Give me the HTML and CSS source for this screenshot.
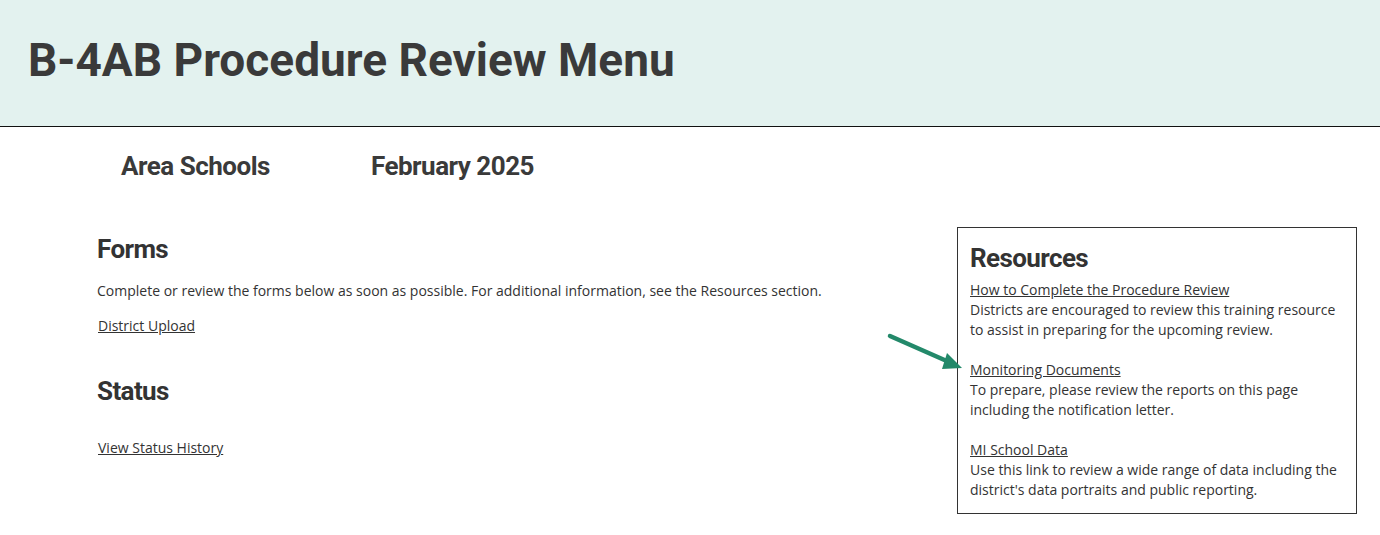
FILE: index.html
```html
<!DOCTYPE html>
<html lang="en">
<head>
<meta charset="utf-8">
<title>B-4AB Procedure Review Menu</title>
<link rel="stylesheet" href="styles.css">
</head>
<body>
<header class="page-header">
  <h1 class="page-title">B-4AB Procedure Review Menu</h1>
</header>
<main class="page-main">
  <div class="meta-row">
    <h2 class="meta-item">Area Schools</h2>
    <h2 class="meta-item">February 2025</h2>
  </div>
  <div class="content">
    <div class="left-col">
      <section class="section forms">
        <h2 class="section-title">Forms</h2>
        <p class="section-text">Complete or review the forms below as soon as possible. For additional information, see the Resources section.</p>
        <a class="link" href="#">District Upload</a>
      </section>
      <section class="section status">
        <h2 class="section-title">Status</h2>
        <a class="link" href="#">View Status History</a>
      </section>
    </div>
    <aside class="resources">
      <svg class="arrow" width="80" height="40" viewBox="0 0 80 40" aria-hidden="true">
        <line x1="3" y1="4" x2="62" y2="30" stroke="#23896a" stroke-width="4.5" stroke-linecap="round"/>
        <polygon points="60,21 75,36 55,37" fill="#23896a"/>
      </svg>
      <h2 class="res-title">Resources</h2>
      <div class="res-item">
        <a class="link" href="#">How to Complete the Procedure Review</a>
        <p class="res-text">Districts are encouraged to review this training resource to assist in preparing for the upcoming review.</p>
      </div>
      <div class="res-item">
        <a class="link" href="#">Monitoring Documents</a>
        <p class="res-text">To prepare, please review the reports on this page including the notification letter.</p>
      </div>
      <div class="res-item">
        <a class="link" href="#">MI School Data</a>
        <p class="res-text">Use this link to review a wide range of data including the district's data portraits and public reporting.</p>
      </div>
    </aside>
  </div>
</main>
</body>
</html>
```
FILE: styles.css
```css
* { box-sizing: border-box; }
html, body { margin: 0; padding: 0; background: #fff; }
body {
  font-family: "Open Sans", "DejaVu Sans", sans-serif;
  font-size: 14px;
  color: #333;
}
.page-header {
  background: #e3f2ef;
  height: 127px;
  border-bottom: 1.5px solid #111;
  display: flex;
  align-items: center;
  padding-left: 28px;
}
.page-title {
  margin: 0;
  font-family: Roboto, "Liberation Sans", sans-serif;
  font-weight: 700;
  font-size: 46px;
  color: #3a3a3a;
  letter-spacing: 0;
  padding-bottom: 7px;
}
.page-main { padding: 0 0 0 97px; }
.meta-row {
  display: flex;
  gap: 101px;
  padding: 24px 0 0 24px;
  height: 100px;
}
.meta-item {
  margin: 0;
  font-family: Roboto, "Liberation Sans", sans-serif;
  font-weight: 700;
  font-size: 26px;
  color: #3a3a3a;
  letter-spacing: -0.5px;
}
.content {
  display: flex;
  justify-content: space-between;
  padding-right: 23px;
}
.section-title, .res-title {
  margin: 0;
  font-family: Roboto, "Liberation Sans", sans-serif;
  font-weight: 700;
  font-size: 26px;
  color: #333;
  letter-spacing: -0.6px;
  line-height: 34px;
}
.forms .section-title { margin-top: 5px; }
.section-text { margin: 15px 0 15px; line-height: 20px; }
.link {
  color: #333;
  text-decoration: underline;
  display: inline-block;
  line-height: 20px;
  padding-left: 1px;
}
.status { margin-top: 38px; }
.status .section-title { margin-bottom: 30px; }
.resources {
  position: relative;
  width: 400px;
  border: 1px solid #333;
  padding: 13px 12px 13px 12px;
  margin-top: 0;
}
.res-title { margin-bottom: 5px; }
.res-item { line-height: 20px; }
.res-item + .res-item { margin-top: 20px; }
.res-item .link { padding-left: 0; }
.res-text { margin: 0; }
.arrow {
  position: absolute;
  left: -71px;
  top: 104px;
}
```
